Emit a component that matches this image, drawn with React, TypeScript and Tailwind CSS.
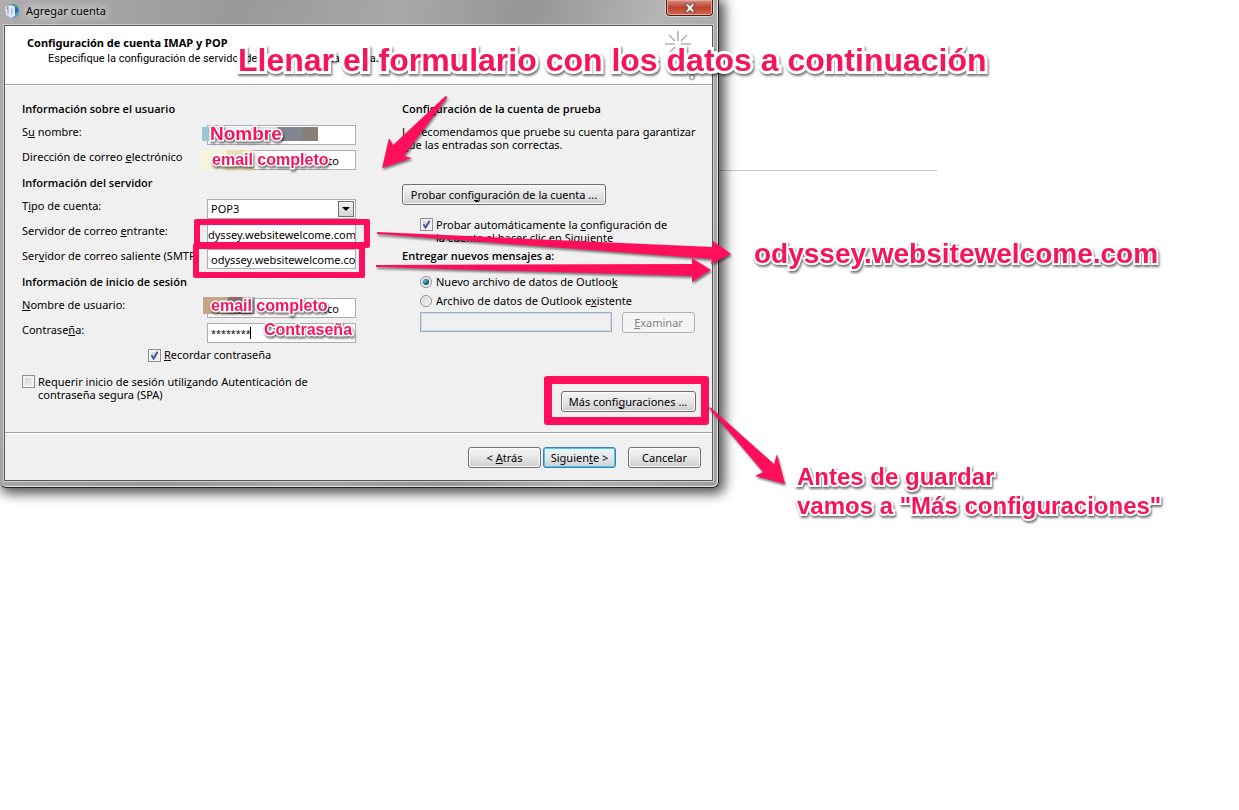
import { useState } from 'react'
import type { ReactNode } from 'react'

const fieldStyle = 'block w-full h-5 border border-[#abadb3] bg-white pl-[3px] text-[11px] outline-none'
const buttonStyle = 'h-[21px] rounded-[3px] border border-[#707070] bg-gradient-to-b from-[#f4f4f4] via-[#e6e6e6] to-[#cfcfcf] text-[11px] leading-[18px] shadow-[inset_0_0_0_1px_#fafafa] whitespace-nowrap'
const noteStyle = 'absolute whitespace-nowrap font-bold text-[#f5155c] [paint-order:stroke_fill] drop-shadow-[1px_2px_1px_rgba(0,0,0,0.55)]'

function Row({ id, label, children }: { id: string; label: ReactNode; children: ReactNode }) {
    return (
        <div className="flex h-5 items-start">
            <label htmlFor={id} className="mr-3 w-[173px] shrink-0 overflow-hidden whitespace-nowrap leading-[14px]">{label}</label>
            <div className="w-[149px]">{children}</div>
        </div>
    )
}

function Heading({ children }: { children: ReactNode }) {
    return <h2 className="pb-[3px] font-['Open_Sans',sans-serif] font-semibold leading-4">{children}</h2>
}

function Check({ id, checked, onChange }: { id: string; checked: boolean; onChange: (v: boolean) => void }) {
    return (
        <span className="relative block h-[13px] w-[13px] shrink-0">
            <input
                id={id}
                type="checkbox"
                checked={checked}
                onChange={(e) => onChange(e.target.checked)}
                className="block h-[13px] w-[13px] appearance-none border border-[#8e8f8f] bg-gradient-to-br from-[#c9ced4] to-[#f6f6f6] shadow-[inset_0_0_0_2px_#f4f4f4]"
            />
            {checked && (
                <svg viewBox="0 0 13 13" className="pointer-events-none absolute inset-0 h-[13px] w-[13px]">
                    <path d="M3.5 6.2 5.6 9.6 9.6 2.8" fill="none" stroke="#41589b" strokeWidth="1.9" />
                </svg>
            )}
        </span>
    )
}

function Radio({ id, checked, onChange }: { id: string; checked: boolean; onChange: () => void }) {
    return (
        <span className="relative block h-3 w-3 shrink-0">
            <input
                id={id}
                type="radio"
                name="deliver"
                checked={checked}
                onChange={onChange}
                className="block h-3 w-3 appearance-none rounded-full border border-[#8e8f8f] bg-gradient-to-br from-[#c9ced4] to-[#f8f8f8] shadow-[inset_0_0_0_1px_#f4f4f4]"
            />
            {checked && <span className="pointer-events-none absolute left-[3px] top-[3px] h-1.5 w-1.5 rounded-full bg-[radial-gradient(circle_at_35%_35%,#5bc0e8,#0f3f63_70%)]" />}
        </span>
    )
}

function TitleBar() {
    return (
        <div className="flex h-[25px] items-start justify-between">
            <div className="flex items-center gap-1.5 pt-[3px]">
                <svg viewBox="0 0 16 16" className="h-4 w-4">
                    <circle cx="8.5" cy="8" r="7" fill="#5f93c4" />
                    <path d="M9 1a7 7 0 0 1 6 8c-1 3-3 4-5 5l-1-5z" fill="#5f9fae" />
                    <path d="M8 1c3 0 5 2 6 4l-4 1z" fill="#4da07c" />
                    <path d="M11 4c2 0 4 2 3 5l-3 2z" fill="#2f67ad" />
                    <path d="M1 4 7 2l4 2v9l-4 2-5-3z" fill="#dbe7f2" />
                    <path d="M3 6h2v5H3zM7 5.500h1.500v6H7z" fill="#a9bfdc" />
                    <circle cx="3.5" cy="5" r="1" fill="#cf5b3c" />
                </svg>
                <h1 className="leading-4 [text-shadow:0_0_8px_#fff,0_0_12px_#fff]">Agregar cuenta</h1>
            </div>
            <button aria-label="Cerrar" className="flex h-4 w-[47px] items-center justify-center rounded-b-[4px] border border-t-0 border-[#4a1d18] bg-gradient-to-b from-[#d98d7f] via-[#bd4030] to-[#d8684a] shadow-[inset_0_0_0_1px_#e5a79b,0_0_0_1px_#d5d5d5]">
                <svg viewBox="0 0 12 10" className="h-2.5 w-3">
                    <path d="M1 .8h3L6 3 8 .8h3L7.800 5 11 9.200H8L6 7 4 9.200H1L4.200 5z" fill="#fff" stroke="#4b4f5c" strokeWidth=".9" />
                </svg>
            </button>
        </div>
    )
}

function Dialog() {
    const [remember, setRemember] = useState(true)
    const [spa, setSpa] = useState(false)
    const [autoTest, setAutoTest] = useState(true)
    const [deliver, setDeliver] = useState('new')

    return (
        <section className="w-full max-w-[719px] rounded-b-[6px] border-b border-r border-[#222] bg-[linear-gradient(100deg,#adadad_0%,#999_30%,#a8a8a8_50%,#959595_66%,#b4b4b4_82%,#a0a0a0_100%)] pb-[6px] pl-1 pr-[5px] shadow-[inset_-1px_-1px_0_#e4e4e4,3px_3px_12px_3px_rgba(0,0,0,0.65)]">
            <TitleBar />
            <div className="border border-[#55585a] bg-[#f0f0f0] shadow-[0_0_0_1px_#cfcfcf]">
                <header className="flex h-[59px] items-start justify-between border-b border-[#a0a0a0] bg-white pl-[22px] pr-3.5 pt-[9px]">
                    <div>
                        <h2 className="font-bold leading-4">Configuración de cuenta IMAP y POP</h2>
                        <p className="pl-[21px] font-[Roboto,sans-serif] leading-4">Especifique la configuración de servidor de correo para esta cuenta.</p>
                    </div>
                    <svg viewBox="0 0 34 50" className="-mt-1 h-[50px] w-[34px]" fill="none" stroke="#b4b4b4" strokeWidth="1.7">
                        <path d="M14 0v10M14 16v10M1 13h10M17 13h10M5 4l6 6M23 4l-6 6M5 22l6-6M15 14l10 20" />
                        <circle cx="28" cy="46" r="2.5" />
                    </svg>
                </header>

                <div className="flex border-t border-white pl-[17px] pr-[18px] pt-[15px]">
                    <div className="w-[380px] shrink-0">
                        <div className="flex flex-col gap-[5px]">
                            <Heading>Información sobre el usuario</Heading>
                            <Row id="name" label={<>S<u>u</u> nombre:</>}>
                                <input id="name" className={fieldStyle} />
                            </Row>
                            <Row id="email" label={<>Dirección de correo <u>e</u>lectrónico</>}>
                                <input id="email" defaultValue=".co" className={`${fieldStyle} pr-4 text-right`} />
                            </Row>
                            <Heading>Información del servidor</Heading>
                            <Row id="type" label={<>T<u>i</u>po de cuenta:</>}>
                                <div className="relative">
                                    <select id="type" className={`${fieldStyle} appearance-none`}>
                                        <option>POP3</option>
                                        <option>IMAP</option>
                                    </select>
                                    <span className="pointer-events-none absolute right-0.5 top-0.5 flex h-4 w-4 items-center justify-center border border-[#707070] bg-gradient-to-b from-[#f2f2f2] to-[#d4d4d4]">
                                        <svg viewBox="0 0 8 4" className="h-1 w-2"><path d="M0 0h8L4 4z" /></svg>
                                    </span>
                                </div>
                            </Row>
                            <Row id="incoming" label={<>Servidor de correo <u>e</u>ntrante:</>}>
                                <input id="incoming" defaultValue="dyssey.websitewelcome.com" className="block h-5 w-full border border-[#abadb3] bg-white text-[11px] outline-none" />
                            </Row>
                            <Row id="outgoing" label={<>Ser<u>v</u>idor de correo saliente (SMTP):</>}>
                                <input id="outgoing" defaultValue="odyssey.websitewelcome.co" className={fieldStyle} />
                            </Row>
                            <Heading>Información de inicio de sesión</Heading>
                            <Row id="user" label={<><u>N</u>ombre de usuario:</>}>
                                <input id="user" defaultValue=".co" className={`${fieldStyle} pr-4 text-right`} />
                            </Row>
                            <Row id="password" label={<>Contrase<u>ñ</u>a:</>}>
                                <div className="relative">
                                    <input id="password" defaultValue="********" className="block h-5 w-full border border-[#abadb3] bg-white px-[3px] text-[9px] outline-none" />
                                    <span className="absolute left-[43px] top-1 h-3 w-px bg-black" />
                                </div>
                            </Row>
                        </div>
                        <div className="mt-1 flex items-center gap-[3px] pl-[126px]">
                            <Check id="remember" checked={remember} onChange={setRemember} />
                            <label htmlFor="remember" className="leading-4"><u>R</u>ecordar contraseña</label>
                        </div>
                        <div className="mt-3 flex gap-[3px]">
                            <Check id="spa" checked={spa} onChange={setSpa} />
                            <label htmlFor="spa" className="w-[300px] leading-[13px]">Requerir inicio de sesión utili<u>z</u>ando Autenticación de contraseña segura (SPA)</label>
                        </div>
                    </div>

                    <div className="flex flex-1 flex-col">
                        <Heading>Configuración de la cuenta de prueba</Heading>
                        <p className="mt-[5px] whitespace-nowrap leading-[13px]">Le recomendamos que pruebe su cuenta para garantizar<br />que las entradas son correctas.</p>
                        <button className={`${buttonStyle} mt-[33px] w-[204px] self-start`}>Probar confi<u>g</u>uración de la cuenta ...</button>
                        <div className="mt-[13px] flex gap-[3px] pl-[18px]">
                            <Check id="auto" checked={autoTest} onChange={setAutoTest} />
                            <label htmlFor="auto" className="whitespace-nowrap leading-[13px]">Probar automáticamente la <u>c</u>onfiguración de<br />la cuenta al hacer clic en Siguiente</label>
                        </div>
                        <div className="mt-1">
                            <Heading>Entregar nuevos mensajes a:</Heading>
                        </div>
                        <div className="mt-[7px] flex flex-col gap-[3px] pl-[18px]">
                            <div className="flex items-center gap-1">
                                <Radio id="new" checked={deliver === 'new'} onChange={() => setDeliver('new')} />
                                <label htmlFor="new" className="leading-4">Nuevo archivo de datos de Outloo<u>k</u></label>
                            </div>
                            <div className="flex items-center gap-1">
                                <Radio id="existing" checked={deliver === 'existing'} onChange={() => setDeliver('existing')} />
                                <label htmlFor="existing" className="leading-4">Archivo de datos de Outlook e<u>x</u>istente</label>
                            </div>
                            <div className="flex gap-2.5">
                                <input aria-label="Archivo de datos" disabled className="h-5 w-48 border border-[#9fb0c6] bg-[#f0f0f0] shadow-[inset_0_0_0_1px_#cbd9e8]" />
                                <button disabled className="h-[21px] w-[73px] rounded-[3px] border border-[#adb2b5] bg-[#f4f4f4] text-[11px] leading-[18px] text-[#838383]"><u>E</u>xaminar</button>
                            </div>
                        </div>
                        <button className={`${buttonStyle} mt-[58px] w-[135px] self-end`}>Más confi<u>g</u>uraciones ...</button>
                    </div>
                </div>

                <footer className="mt-5 flex justify-end border-t border-[#a0a0a0] pb-3 pr-[11px] pt-[14px] shadow-[inset_0_1px_0_#fff]">
                    <button className={`${buttonStyle} w-[73px]`}>&lt; <u>A</u>trás</button>
                    <button className="ml-0.5 h-[21px] w-[73px] whitespace-nowrap rounded-[3px] border border-[#3c7fb1] bg-gradient-to-b from-[#f0f4f5] via-[#e2e8ea] to-[#cbd2d6] text-[11px] leading-[18px] shadow-[inset_0_0_0_1px_#48c8ec]">Siguien<u>t</u>e &gt;</button>
                    <button className={`${buttonStyle} ml-3 w-[73px]`}>Cancelar</button>
                </footer>
            </div>
        </section>
    )
}

// Colour blocks that hide the private values in the form
function Mosaics() {
    return (
        <>
            <div className="absolute left-[202px] top-[127px] flex h-[14px]">
                <span className="w-[7px] bg-[#9bc4d6]" />
                <span className="w-12 bg-[#e6edf3]" />
                <span className="w-5 bg-[#d3dde9]" />
                <span className="w-[25px] bg-[#80858f]" />
                <span className="w-4 bg-[#8a7f76]" />
            </div>
            <div className="absolute left-[201px] top-[150px] flex h-[21px]">
                <span className="w-[25px] bg-[#f6f3df]" />
                <span className="w-7 bg-[#e9e1b8]" />
            </div>
            <div className="absolute left-[203px] top-[297px] flex h-[17px]">
                <span className="w-[25px] bg-[#c2a685]" />
                <span className="w-6 bg-[#8d6a6a]" />
                <span className="w-[3px] bg-[#a9a6c0]" />
            </div>
        </>
    )
}

function Annotations() {
    return (
        <div className="pointer-events-none absolute inset-0 overflow-hidden font-['Liberation_Sans',sans-serif]">
            <Mosaics />
            <div className="absolute left-[194px] top-[219px] h-[29px] w-[176px] rounded-[2px] border-[6px] border-[#ff0f5b]" />
            <div className="absolute left-[193px] top-[243px] h-[35px] w-[172px] rounded-[2px] border-[6px] border-[#ff0f5b]" />
            <div className="absolute left-[544px] top-[376px] h-[49px] w-[165px] rounded-[3px] border-8 border-[#ff0f5b]" />
            <svg width="1239" height="810" className="absolute left-0 top-0 drop-shadow-[1px_2px_1px_rgba(0,0,0,0.5)]" fill="#ff0f5b">
                <path d="M445.500 96l2 1L404 156l8 2-30 10 7-30 4 7z" />
                <path d="M377 232l336 15v-6l18 13-20 10 1-5-335-25z" />
                <path d="M376 265l316-1v-6l19 12-19 12v-6l-316-9z" />
                <path d="M710 407l64 57 3-10 8 30-30-8 8-4-54-64z" />
            </svg>
            <p className={`${noteStyle} left-[238px] top-[42px] text-[32px] leading-9 [-webkit-text-stroke:6px_white]`}>Llenar el formulario con los datos a continuación</p>
            <p className={`${noteStyle} left-[754px] top-[238px] text-[28px] leading-8 [-webkit-text-stroke:4px_white]`}>odyssey.websitewelcome.com</p>
            <p className={`${noteStyle} left-[797px] top-[462px] text-2xl leading-[29px] [-webkit-text-stroke:4px_white]`}>
                Antes de guardar<br />vamos a "Más configuraciones"
            </p>
            <p className={`${noteStyle} left-[210px] top-[122px] text-[19px] leading-6 [-webkit-text-stroke:3px_white]`}>Nombre</p>
            <p className={`${noteStyle} left-[212px] top-[150px] text-base leading-5 [-webkit-text-stroke:3px_white]`}>email completo</p>
            <p className={`${noteStyle} left-[211px] top-[296px] text-base leading-5 [-webkit-text-stroke:3px_white]`}>email completo</p>
            <p className={`${noteStyle} left-[264px] top-[320px] text-base leading-5 [-webkit-text-stroke:3px_white]`}>Contraseña</p>
        </div>
    )
}

export default function App() {
    return (
        <main className="relative min-h-screen overflow-hidden bg-white font-['Noto_Sans',sans-serif] text-[11px] text-black">
            <div className="absolute left-0 top-[170px] h-px w-[937px] bg-[#c4c4c4]" />
            <div className="relative">
                <Dialog />
            </div>
            <Annotations />
        </main>
    )
}
